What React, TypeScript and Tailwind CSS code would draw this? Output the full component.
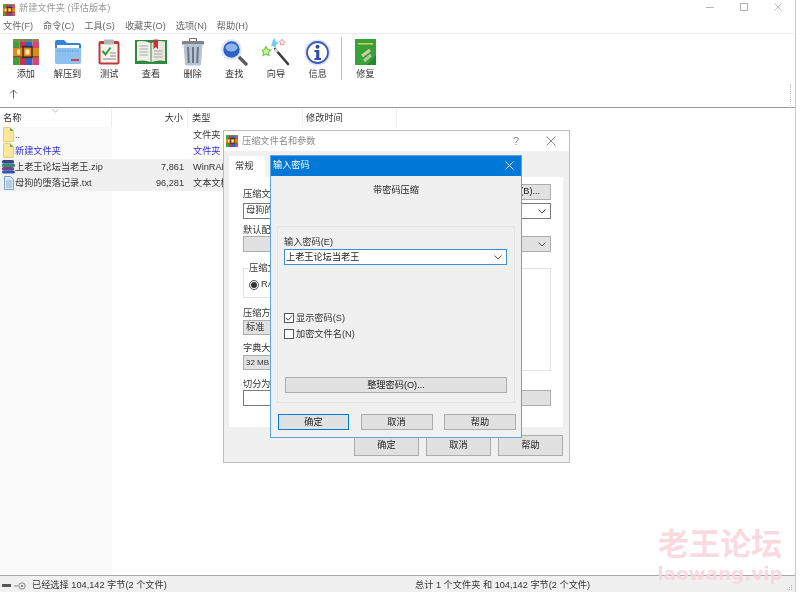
import { ReactNode } from 'react';

const cjk = "font-['Liberation_Sans','Noto_Sans_CJK_SC',sans-serif]";

function RarIcon({ size = 26 }: { size?: number }) {
  return (
    <svg width={size} height={size} viewBox="0 0 26 26">
      <rect x="0" y="0" width="6.5" height="26" fill="#3f9f3a" />
      <rect x="6.5" y="0" width="6.5" height="26" fill="#c8324a" />
      <rect x="13" y="0" width="6.5" height="26" fill="#3560c8" />
      <rect x="19.5" y="0" width="6.5" height="26" fill="#d8486e" />
      <rect x="0" y="0" width="26" height="3" fill="#7a9a50" opacity="0.7" />
      <rect x="0" y="9" width="26" height="9" fill="#d98a1c" />
      <rect x="0" y="17" width="26" height="1.5" fill="#8a5a10" />
      <rect x="10" y="7.5" width="9" height="11" fill="none" stroke="#4a2c08" strokeWidth="1.5" />
      <rect x="4" y="10.5" width="3" height="5" fill="#f5e6b0" />
      <rect x="12.5" y="10.5" width="4" height="5" fill="#f5e6b0" />
    </svg>
  );
}

function ExtractIcon() {
  return (
    <svg width="28" height="26" viewBox="0 0 28 26">
      <path d="M1 3 Q1 1 3 1 H10 L13 4 H25 Q27 4 27 6 V10 H1 Z" fill="#2f86d8" />
      <rect x="3" y="6" width="22" height="5" fill="#fff" />
      <path d="M1 9 H27 V23 Q27 25 25 25 H3 Q1 25 1 23 Z" fill="#8cc2f2" />
      <path d="M3 12 H25" stroke="#5f8fbe" strokeWidth="1" strokeDasharray="1.5 1" />
      <rect x="17" y="20" width="8" height="2" fill="#d8404a" />
    </svg>
  );
}

function TestIcon() {
  return (
    <svg width="22" height="26" viewBox="0 0 22 26">
      <rect x="0.5" y="2" width="21" height="23.5" rx="2" fill="#bf3a3a" />
      <rect x="2.5" y="5" width="17" height="18.5" fill="#f6f4ee" />
      <rect x="6" y="0.5" width="10" height="5" rx="1" fill="#b5b5b5" />
      <path d="M4.5 12 L7.5 15.5 L12.5 8.5" fill="none" stroke="#2c9a3a" strokeWidth="2" />
      <path d="M12 14 H18 M12 17 H18 M5 20 H18" stroke="#8a8a8a" strokeWidth="1" />
    </svg>
  );
}

function BookIcon() {
  return (
    <svg width="32" height="26" viewBox="0 0 32 26">
      <rect x="0" y="1" width="32" height="24" fill="#2f8a3e" />
      <path d="M2 2.5 Q9 1 15.5 4 V23 Q9 20.5 2 22 Z" fill="#f1efe8" />
      <path d="M30 2.5 Q23 1 16.5 4 V23 Q23 20.5 30 22 Z" fill="#e8e6de" />
      <path d="M4.5 7 H13 M4.5 10 H13 M4.5 13 H13 M4.5 16 H13 M19 12 H27.5 M19 15 H27.5 M19 18 H27.5" stroke="#a9a9a2" strokeWidth="1" />
      <path d="M18.5 0.5 H23 V10 L20.7 8 L18.5 10 Z" fill="#c8323a" />
    </svg>
  );
}

function TrashIcon() {
  return (
    <svg width="24" height="28" viewBox="0 0 24 28">
      <rect x="8.5" y="0.5" width="7" height="3" rx="1" fill="none" stroke="#6f7378" strokeWidth="1.2" />
      <rect x="1" y="3" width="22" height="3.5" rx="1" fill="#7f8488" />
      <path d="M2.5 6.5 H21.5 L20 26 Q19.8 27.5 18 27.5 H6 Q4.2 27.5 4 26 Z" fill="#b9c3cf" />
      <path d="M7 9 L7.8 25 M12 9 V25 M17 9 L16.2 25" stroke="#66768c" strokeWidth="2" />
    </svg>
  );
}

function SearchIcon() {
  return (
    <svg width="28" height="28" viewBox="0 0 28 28">
      <path d="M18 18 L26 26" stroke="#5e5e5e" strokeWidth="3.4" strokeLinecap="round" />
      <circle cx="11.5" cy="11.5" r="10.5" fill="#dfe8f2" />
      <circle cx="11.5" cy="11.5" r="8.2" fill="#2f62c4" />
      <ellipse cx="11.5" cy="9.5" rx="6" ry="4" fill="#8fb4ea" />
    </svg>
  );
}

function WizardIcon() {
  return (
    <svg width="28" height="28" viewBox="0 0 28 28">
      <path d="M13 11 L26 26" stroke="#3c3c3c" strokeWidth="2.6" strokeLinecap="round" />
      <path d="M13 11 L15.5 14" stroke="#d9d9d9" strokeWidth="2.6" />
      <path d="M9 8 L11 2 L13 0 L13.5 3.5 L17 5 L14 6.5 L13.5 10 L11 8 Z" fill="#6fd0ec" />
      <path d="M20 1 L21 3 L23 3.5 L21.7 5 L22 7 L20 6 L18.3 7 L18.6 5 L17.2 3.5 L19.2 3 Z" fill="#fff" stroke="#ef9aa6" strokeWidth="1" />
      <path d="M4 8.5 L5.5 11.5 L8.7 12 L6.4 14.3 L7 17.5 L4 16 L1 17.5 L1.6 14.3 L-0.7 12 L2.5 11.5 Z" fill="#cdf4a6" stroke="#6fcc4a" strokeWidth="1.2" />
    </svg>
  );
}

function InfoIcon() {
  return (
    <svg width="27" height="27" viewBox="0 0 27 27">
      <circle cx="13.5" cy="13.5" r="13" fill="#dbe2f2" />
      <circle cx="13.5" cy="13.5" r="10.5" fill="#fff" stroke="#3d5cb0" strokeWidth="1.8" />
      <circle cx="13.5" cy="7.8" r="2" fill="#2a4ba8" />
      <path d="M10.5 11 H15.3 V19 H17 V21 H10.5 V19 H12.2 V13 H10.5 Z" fill="#2a4ba8" />
    </svg>
  );
}

function RepairIcon() {
  return (
    <svg width="21" height="26" viewBox="0 0 21 26">
      <rect x="0" y="0" width="21" height="26" fill="#36a238" />
      <rect x="3" y="4" width="15" height="1.6" fill="#d8c65a" />
      <path d="M15 11 L7 17" stroke="#d7cda0" strokeWidth="3" />
      <path d="M16 16 L9 22" stroke="#b7c69a" strokeWidth="3" />
      <path d="M21 26 H12 L21 16 Z" fill="#1d7a28" opacity="0.6" />
    </svg>
  );
}

function FolderFile() {
  return (
    <svg width="11" height="15" viewBox="0 0 11 15">
      <path d="M0.5 0.5 H7 L10.5 4 V14.5 H0.5 Z" fill="#fbe69b" stroke="#e8cf78" strokeWidth="1" />
      <path d="M7 0.5 V4 H10.5 Z" fill="#6aa84f" />
    </svg>
  );
}

function ZipFile() {
  return (
    <svg width="13" height="15" viewBox="0 0 13 15">
      <rect x="0" y="1" width="12" height="3.5" rx="1.5" fill="#3b3f8f" />
      <rect x="0" y="4.5" width="13" height="3.5" rx="1.5" fill="#2f8f6a" />
      <rect x="0" y="8" width="12" height="3.5" rx="1.5" fill="#7a3f95" />
      <rect x="0" y="11.5" width="13" height="3" rx="1.5" fill="#2a5aa8" />
    </svg>
  );
}

function TxtFile() {
  return (
    <svg width="10" height="14" viewBox="0 0 10 14">
      <path d="M0.5 0.5 H6.5 L9.5 3.5 V13.5 H0.5 Z" fill="#d9e8f6" stroke="#7ea3c8" strokeWidth="1" />
      <path d="M2 5 H8 M2 7 H8 M2 9 H8 M2 11 H8" stroke="#7ea3c8" strokeWidth="0.8" />
    </svg>
  );
}

function CloseX({ size = 10, color = '#8a8a8a' }: { size?: number; color?: string }) {
  return (
    <svg width={size} height={size} viewBox="0 0 10 10">
      <path d="M0.5 0.5 L9.5 9.5 M9.5 0.5 L0.5 9.5" stroke={color} strokeWidth="1" />
    </svg>
  );
}

function Chevron() {
  return (
    <svg width="8" height="5" viewBox="0 0 8 5">
      <path d="M0.5 0.5 L4 4 L7.5 0.5" fill="none" stroke="#555" strokeWidth="1" />
    </svg>
  );
}

function Tool({ label, children }: { label: string; children: ReactNode }) {
  return (
    <div className="w-[41.7px] flex flex-col items-center">
      <div className="h-[30px] flex items-center justify-center">{children}</div>
      <span className="mt-[1px] text-[9.2px] leading-[13px] text-[#333]">{label}</span>
    </div>
  );
}

function Btn({ label, className }: { label: string; className: string }) {
  return (
    <div className={`flex items-center justify-center bg-[#e1e1e1] border border-[#adadad] text-[9.2px] text-[#222] ${className}`}>
      {label}
    </div>
  );
}

const rows = [
  { icon: <FolderFile />, name: '..', size: '', type: '文件夹', cls: 'text-[#333]', sel: false },
  { icon: <FolderFile />, name: '新建文件夹', size: '', type: '文件夹', cls: 'text-[#2a2ae0]', sel: false },
  { icon: <ZipFile />, name: '上老王论坛当老王.zip', size: '7,861', type: 'WinRAR', cls: 'text-[#333]', sel: true },
  { icon: <TxtFile />, name: '母狗的堕落记录.txt', size: '96,281', type: '文本文档', cls: 'text-[#333]', sel: true },
];

function BackDialog() {
  return (
    <div className="absolute left-[223px] top-[130px] w-[347px] h-[333px] bg-[#f0f0f0] border border-[#bdbdbd] flex flex-col text-[9.2px] text-[#333]">
      <div className="h-[20px] bg-white flex items-center pl-[2px]">
        <RarIcon size={12} />
        <span className="ml-[4px] pt-[2px] text-[#8a8a8a]">压缩文件名和参数</span>
        <span className="ml-auto mr-[27px] text-[11px] text-[#888]">?</span>
        <div className="mr-[13px]"><CloseX /></div>
      </div>
      <div className="pt-[5px] pl-[5px]">
        <div className="w-[36px] h-[21px] bg-white pl-[6px] flex items-center">常规</div>
        <div className="w-[334px] h-[250px] bg-white pt-[7px] pl-[14px] pr-[12px]">
          <div className="flex justify-between h-[16px]">
            <span className="mt-[3px] leading-[14px]">压缩文件名(A)</span>
            <Btn label="浏览(B)..." className="w-[60px] h-[16px]" />
          </div>
          <div className="mt-[3px] h-[16px] border border-[#7a7a7a] pl-[2px] flex items-center justify-between pr-[4px]">
            <span>母狗的堕落记录.rar</span>
            <Chevron />
          </div>
          <div className="mt-[5px] mb-[-1px] leading-[13px]">默认配置</div>
          <div className="h-[16px] bg-[#e1e1e1] border border-[#adadad] flex items-center justify-end pr-[4px]"><Chevron /></div>
          <div className="mt-[16px] flex justify-between">
            <div className="w-[130px]">
              <div className="relative h-[30px] border border-[#e3e3e3]">
                <span className="absolute left-[5px] top-[-7px] bg-white">压缩文件格式</span>
                <div className="absolute left-[5px] top-[9px] flex items-center gap-[2px]">
                  <span className="w-[10px] h-[10px] rounded-full border border-[#555] flex items-center justify-center">
                    <span className="w-[6px] h-[6px] rounded-full bg-[#333]" />
                  </span>
                  RAR
                </div>
              </div>
              <div className="mt-[9px] leading-[13px]">压缩方式(M)</div>
              <div className="h-[15px] bg-[#e1e1e1] border border-[#adadad] pl-[2px] pt-[1px] flex items-center">标准</div>
              <div className="mt-[7px] leading-[13px]">字典大小(I)</div>
              <div className="h-[15px] bg-[#e1e1e1] border border-[#adadad] pl-[2px] flex items-center text-[8px]">32 MB</div>
            </div>
            <div className="w-[160px] h-[103px] border border-[#e3e3e3]" />
          </div>
          <div className="mt-[7px] mb-[-1px] leading-[13px]">切分为分卷</div>
          <div className="flex justify-between h-[16px]">
            <div className="w-[200px] border border-[#7a7a7a]" />
            <div className="w-[60px] bg-[#e1e1e1] border border-[#adadad]" />
          </div>
        </div>
      </div>
      <div className="mt-[8px] pr-[6px] flex justify-end gap-[7px]">
        <Btn label="确定" className="w-[65px] h-[21px]" />
        <Btn label="取消" className="w-[65px] h-[21px]" />
        <Btn label="帮助" className="w-[65px] h-[21px]" />
      </div>
    </div>
  );
}

function PasswordDialog() {
  return (
    <div className="absolute left-[270px] top-[155px] w-[252px] h-[283px] bg-[#f0f0f0] border border-[#5ea5dc] flex flex-col text-[9.2px] text-[#333]">
      <div className="h-[20px] bg-[#0078d7] flex items-center justify-between pl-[2px] pr-[7px] text-white">
        <span>输入密码</span>
        <div className="mb-[2px]"><CloseX size={9} color="#ffffff" /></div>
      </div>
      <div className="h-[50px] pt-[8px] text-center leading-[13px] text-[#222]">带密码压缩</div>
      <div className="mx-[6px] h-[177px] border border-[#e4e4e4] pl-[6px] pr-[7px] pt-[9px]">
        <div className="leading-[13px]">输入密码(E)</div>
        <div className="h-[16px] bg-white border border-[#3a8fd8] pl-[1px] pr-[4px] flex items-center justify-between text-[#222]">
          <span className="pt-[2px]">上老王论坛当老王</span>
          <Chevron />
        </div>
        <div className="mt-[48px] flex items-center h-[10px] gap-[2px]">
          <svg width="10" height="10" viewBox="0 0 10 10">
            <rect x="0.5" y="0.5" width="9" height="9" fill="#fff" stroke="#555" />
            <path d="M2 5 L4.2 7.2 L8 2.5" fill="none" stroke="#555" strokeWidth="1" />
          </svg>
          <span className="pt-[2px]">显示密码(S)</span>
        </div>
        <div className="mt-[6px] flex items-center h-[10px] gap-[2px]">
          <span className="w-[10px] h-[10px] bg-white border border-[#555]" />
          <span className="pt-[2px]">加密文件名(N)</span>
        </div>
        <Btn label="整理密码(O)..." className="mt-[38px] ml-[1px] w-[222px] h-[16px] pt-[2px]" />
      </div>
      <div className="mt-[11px] pl-[7px] pr-[5px] flex justify-between">
        <Btn label="确定" className="w-[71px] h-[16px] pt-[2px] !border-[#0078d7] border-[1.5px]" />
        <Btn label="取消" className="w-[72px] h-[16px] pt-[2px]" />
        <Btn label="帮助" className="w-[72px] h-[16px] pt-[2px]" />
      </div>
    </div>
  );
}

export default function App() {
  return (
    <div className={`relative w-[800px] h-[592px] overflow-hidden bg-white blur-[0.35px] ${cjk}`}>
      <div className="w-[796px] h-full flex flex-col border-r border-[#c8c8c8]">
        <div className="h-[20px] flex items-center pl-[3px] shrink-0">
          <RarIcon size={12} />
          <span className="ml-[4px] text-[9.2px] text-[#9a9a9a] mt-[-3px]">新建文件夹 (评估版本)</span>
          <div className="ml-auto flex items-center mt-[-6px] mr-[13px] gap-[26px]">
            <div className="w-[8px] h-[1px] bg-[#b5b5b5]" />
            <div className="w-[8px] h-[8px] border border-[#b0b0b0]" />
            <CloseX size={8} color="#b0b0b0" />
          </div>
        </div>
        <div className="h-[13px] flex pl-[3px] gap-[10px] text-[9.2px] leading-[13px] text-[#666] shrink-0">
          <span>文件(F)</span>
          <span>命令(C)</span>
          <span>工具(S)</span>
          <span>收藏夹(O)</span>
          <span>选项(N)</span>
          <span>帮助(H)</span>
        </div>
        <div className="relative h-[74px] border-t border-[#ececec] shrink-0">
          <div className="flex pl-[5px] pt-[3px]">
            <Tool label="添加"><RarIcon /></Tool>
            <Tool label="解压到"><ExtractIcon /></Tool>
            <Tool label="测试"><TestIcon /></Tool>
            <Tool label="查看"><BookIcon /></Tool>
            <Tool label="删除"><TrashIcon /></Tool>
            <Tool label="查找"><SearchIcon /></Tool>
            <Tool label="向导"><WizardIcon /></Tool>
            <Tool label="信息"><InfoIcon /></Tool>
            <div className="ml-[2px] mr-[3px] w-[1px] h-[43px] bg-[#bdbdbd]" />
            <Tool label="修复"><RepairIcon /></Tool>
          </div>
          <div className="pl-[9px] mt-[8px]">
            <svg width="9" height="10" viewBox="0 0 9 10">
              <path d="M4.5 9.5 V1 M1 4.5 L4.5 1 L8 4.5" fill="none" stroke="#666" strokeWidth="1" />
            </svg>
          </div>
          <div className="absolute right-[4px] bottom-[1px] h-[22px] border-l border-dotted border-[#c4c4c4]" />
        </div>
        <div className="h-[20px] border-t border-[#9a9a9a] flex text-[9.2px] leading-[21px] text-[#333] shrink-0">
          <div className="relative w-[112px] pl-[3px] border-r border-[#eeeeee]">
            名称
            <svg className="absolute left-[52px] top-[1px]" width="7" height="4" viewBox="0 0 7 4">
              <path d="M0.5 0.5 L3.5 3 L6.5 0.5" fill="none" stroke="#aaa" strokeWidth="0.8" />
            </svg>
          </div>
          <div className="w-[76px] pr-[4px] text-right border-r border-[#eeeeee]">大小</div>
          <div className="w-[115px] pl-[4px] border-r border-[#eeeeee]">类型</div>
          <div className="w-[94px] pl-[3px] border-r border-[#eeeeee]">修改时间</div>
        </div>
        <div className="flex-1 relative">
          <div className="absolute left-0 top-0 bottom-0 w-[112px] bg-[#fafafa]" />
          <div className="relative">
            {rows.map((r) => (
              <div key={r.name} className={`h-[16px] flex items-center text-[9.2px] ${r.sel ? 'bg-[#f0f0f0] w-[230px]' : ''} ${r.cls}`}>
                <div className="w-[112px] shrink-0 flex items-center pl-[2px] whitespace-nowrap">
                  <span className="w-[13px] shrink-0 flex justify-center">{r.icon}</span>
                  <span className="pt-[2px]">{r.name}</span>
                </div>
                <div className="w-[72px] shrink-0 pt-[2px] text-right text-[#333]">{r.size}</div>
                <div className="pl-[9px] pt-[2px] shrink-0 whitespace-nowrap">{r.type}</div>
              </div>
            ))}
          </div>
        </div>
        <div className="relative h-[17px] border-t border-[#a8a8a8] bg-[#f0f0f0] flex items-center pt-[3px] text-[9.2px] text-[#333] shrink-0">
          <div className="w-[32px] pl-[2px] flex items-center gap-[3px]">
            <div className="w-[9px] h-[3px] bg-[#555]" />
            <svg width="12" height="8" viewBox="0 0 12 8">
              <path d="M0 4 H4" stroke="#888" strokeWidth="1" />
              <circle cx="8" cy="4" r="3.2" fill="none" stroke="#888" strokeWidth="1" />
              <circle cx="8" cy="4" r="1.2" fill="#888" />
            </svg>
          </div>
          <div className="w-[383px]">已经选择 104,142 字节(2 个文件)</div>
          <div>总计 1 个文件夹 和 104,142 字节(2 个文件)</div>
          <svg className="absolute right-[2px] bottom-[1px]" width="7" height="7" viewBox="0 0 7 7">
            <path d="M5 1 h1 v1 h-1 Z M3 3 h1 v1 h-1 Z M5 3 h1 v1 h-1 Z M1 5 h1 v1 h-1 Z M3 5 h1 v1 h-1 Z M5 5 h1 v1 h-1 Z" fill="#b5b5b5" />
          </svg>
        </div>
      </div>
      <BackDialog />
      <PasswordDialog />
      <div className="absolute left-[655px] top-[524px] w-[130px] text-center font-bold text-[#f9d3dc]/85 pointer-events-none">
        <div className="text-[31px] leading-[36px] font-['Noto_Sans_CJK_SC',sans-serif]">老王论坛</div>
        <div className="mt-[4px] text-[18.4px] leading-[20px] font-['DejaVu_Sans',sans-serif] whitespace-nowrap">laowang.vip</div>
      </div>
    </div>
  );
}
